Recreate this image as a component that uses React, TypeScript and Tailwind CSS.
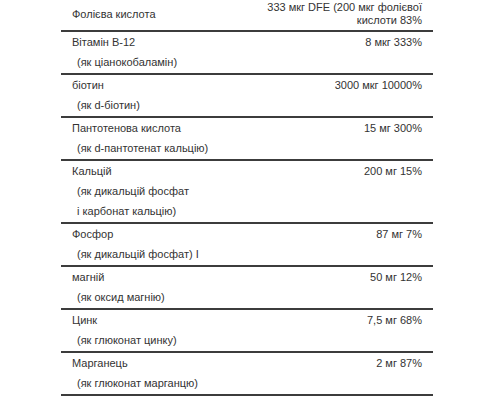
import React from "react";

type Row = { label: string; subs: string[]; value: string };

const rows: Row[] = [
  { label: "Вітамін B-12", subs: ["(як ціанокобаламін)"], value: "8 мкг 333%" },
  { label: "біотин", subs: ["(як d-біотин)"], value: "3000 мкг 10000%" },
  { label: "Пантотенова кислота", subs: ["(як d-пантотенат кальцію)"], value: "15 мг 300%" },
  { label: "Кальцій", subs: ["(як дикальцій фосфат", "і карбонат кальцію)"], value: "200 мг 15%" },
  { label: "Фосфор", subs: ["(як дикальцій фосфат) І"], value: "87 мг 7%" },
  { label: "магній", subs: ["(як оксид магнію)"], value: "50 мг 12%" },
  { label: "Цинк", subs: ["(як глюконат цинку)"], value: "7,5 мг 68%" },
  { label: "Марганець", subs: ["(як глюконат марганцю)"], value: "2 мг 87%" },
];

export default function App() {
  return (
    <div
      className="w-[500px] h-[400px] bg-white overflow-hidden text-[11px] text-[#333]"
      style={{ fontFamily: '"Liberation Sans", Arial, sans-serif' }}
    >
      <div className="ml-[61px] w-[372px] flex flex-col">
        <div className="flex justify-between pt-[1px] pb-[3px] border-b-2 border-[#3c3c3c]">
          <div className="pl-[11px] pt-[3px] leading-[20px]">Фолієва кислота</div>
          <div className="pr-[11px] text-right leading-[13px]">
            333 мкг DFE (200 мкг фолієвої
            <br />
            кислоти 83%
          </div>
        </div>
        {rows.map((r) => (
          <div
            key={r.label}
            className="flex justify-between pb-[1px] border-b-2 border-[#3c3c3c] leading-[20px]"
          >
            <div className="pl-[11px]">
              <div>{r.label}</div>
              {r.subs.map((s) => (
                <div key={s} className="pl-[5px]">
                  {s}
                </div>
              ))}
            </div>
            <div className="pr-[11px] text-right">{r.value}</div>
          </div>
        ))}
      </div>
    </div>
  );
}
